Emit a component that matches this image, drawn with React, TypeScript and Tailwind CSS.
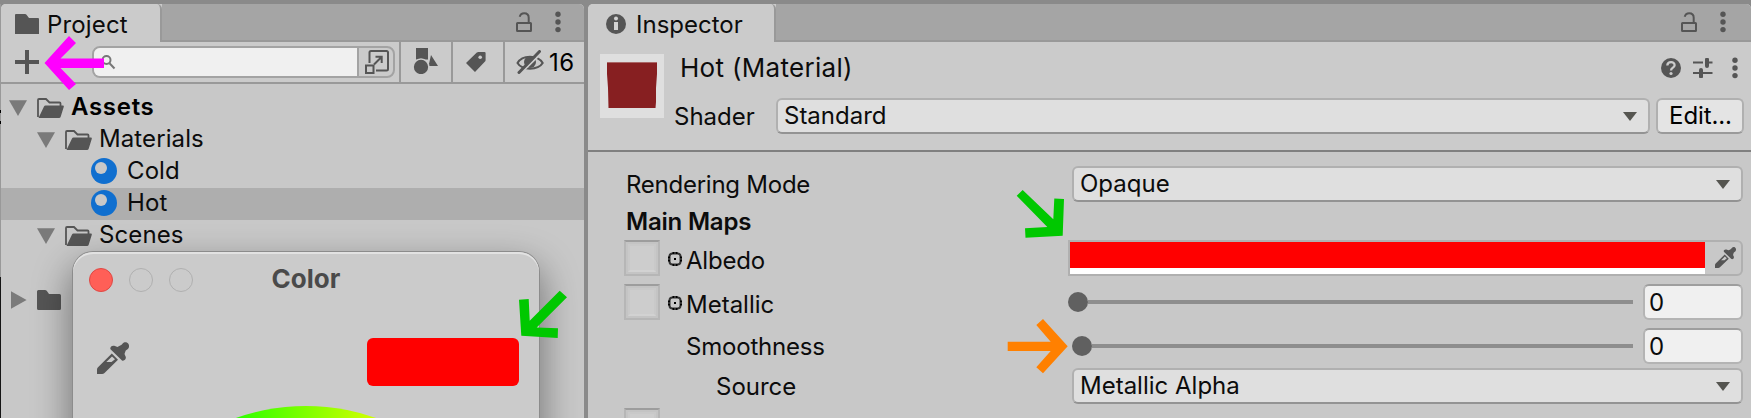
import React from "react";

type Box = { className?: string };

function Kebab({ className = "" }: Box) {
  return (
    <svg width="6" height="22" viewBox="0 0 6 22" className={`shrink-0 ${className}`} fill="#555">
      <circle cx="3" cy="3.2" r="2.7" />
      <circle cx="3" cy="11" r="2.7" />
      <circle cx="3" cy="18.6" r="2.7" />
    </svg>
  );
}

function Lock({ className = "" }: Box) {
  return (
    <svg width="16" height="20" viewBox="0 0 16 20" className={`shrink-0 ${className}`} fill="none" stroke="#555" strokeWidth="2">
      <rect x="1" y="11" width="14" height="8" rx="0.5" />
      <path d="M3.7 4.8C4.3 2.4 6 1.2 8.2 1.2c2.700 0 4.500 1.800 4.500 4.500V11" />
    </svg>
  );
}

function FolderOpen() {
  return (
    <svg width="28" height="20" viewBox="0 0 28 20" className="shrink-0">
      <path d="M1 19V2q0-1 1-1h7l3.500 3.500H22.500q1 0 1 1V8" fill="none" stroke="#555" strokeWidth="1.800" />
      <path d="M7 8.500Q7.500 7.600 8.500 7.600H25.800q1.400 0 1 1.200L23.700 18.700Q23.300 20 22 20H1.500z" fill="#555" />
    </svg>
  );
}

function Fold({ closed = false }: { closed?: boolean }) {
  return (
    <svg width="18" height="18" viewBox="0 0 18 18" className="shrink-0" fill="#7a7a7a">
      {closed ? <path d="M2 0.300L17.600 9 2 17.800z" /> : <path d="M0 1.300H18L9 17z" />}
    </svg>
  );
}

function MaterialBall() {
  return (
    <svg width="26" height="26" viewBox="0 0 26 26" className="shrink-0">
      <circle cx="13" cy="13" r="13" fill="#106fcf" />
      <circle cx="10" cy="10" r="6" fill="#c8c8c8" />
    </svg>
  );
}

function Dropper({ className = "" }: Box) {
  return (
    <svg viewBox="0 0 32 32" className={`shrink-0 ${className}`}>
      <path d="M13.500 7.200C12.600 5.200 14.800 3 17.300 3.800L20.500 5C22 4.200 24.500 3.300 25.700 1.500 27.200-.5 30.300-.2 31.500 2 32.700 4.300 31.800 6.700 29.800 7.800 28 8.800 28.300 10.500 27.500 12L28.800 15C29.200 17.400 27 19.300 25 18.400z" fill="#555" />
      <path fillRule="evenodd" d="M14.800 11.500L21 17.800 7.500 31Q6.500 32 5 32H0V27.500Q0 26.200 1 25.200zM15 14.500L9.300 20H14.500L18 17.200z" fill="#555" />
    </svg>
  );
}

function Caret() {
  return (
    <svg width="14" height="9" viewBox="0 0 14 9" className="shrink-0" fill="#555550">
      <path d="M0 0H14L7 9z" />
    </svg>
  );
}

function Dropdown({ label, className = "" }: { label: string; className?: string }) {
  return (
    <div className={`flex h-9 items-center justify-between rounded-[6px] border-2 border-[#b0b0b0] border-b-[#939393] bg-[#dfdfdf] pr-[11px] pl-[6px] ${className}`}>
      <span>{label}</span>
      <Caret />
    </div>
  );
}

function Slider({ value, className = "" }: { value: string; className?: string }) {
  return (
    <div className="flex h-9 items-center">
      <div className={`flex w-[565px] items-center ${className}`}>
        <div className="size-5 rounded-full bg-[#606060]" />
        <div className="h-1 flex-1 bg-[#8e8e8e]" />
      </div>
      <div className="ml-auto flex h-9 w-[100px] items-center rounded-[6px] border-2 border-[#b4b4b4] border-t-[#9e9e9e] bg-[#f0f0f0] pt-px pl-1">
        {value}
      </div>
    </div>
  );
}

function TextureSlot() {
  return (
    <div className="size-9 shrink-0 border-2 border-[#b6b6b6] border-t-[#9d9d9d] bg-[#c4c4c4] p-[2px]">
      <div className="size-full border-2 border-[#c9c9c9] border-b-[#d2d2d2] bg-[#cdcdcd]" />
    </div>
  );
}

function Target() {
  return (
    <svg width="14" height="14" viewBox="0 0 14 14" className="mt-0.5 mr-1 ml-2 shrink-0" fill="none">
      <rect x="1.500" y="1.500" width="11" height="11" rx="3" stroke="#333" strokeWidth="2" />
      <path d="M4.500 1H9.500M4.500 13H9.500M1 4.500V9.500M13 4.500V9.500" stroke="#000" strokeWidth="2" />
      <path d="M7 0V2M7 12V14M0 7H2M12 7H14" stroke="#666" strokeWidth="1" />
      <rect x="6" y="6" width="2" height="2" fill="#000" />
    </svg>
  );
}

function TreeRow({ label, indent, ball = false, selected = false, bold = false }: { label: string; indent: string; ball?: boolean; selected?: boolean; bold?: boolean }) {
  return (
    <div className={`flex h-8 items-center ${indent} ${selected ? "bg-[#aeaeae]" : ""}`}>
      {ball ? (
        <div className="mr-[10px] -mt-0.5"><MaterialBall /></div>
      ) : (
        <div className="mr-1.5 flex items-center gap-[10px]">
          <Fold />
          <FolderOpen />
        </div>
      )}
      <span className={`-mt-[3px] ${bold ? "font-semibold tracking-[0.7px] text-black" : "tracking-[0.1px]"}`}>{label}</span>
    </div>
  );
}

function ProjectPanel() {
  return (
    <section className="flex w-[583px] shrink-0 flex-col overflow-hidden rounded-t-[5px] bg-[#c8c8c8]">
      <div className="flex h-[38px] shrink-0 bg-[#cbcbcb]">
        <div className="flex w-[161px] items-center rounded-tr-[5px] border-r-2 border-[#999] bg-[#cbcbcb] pl-[14px]">
          <svg width="24" height="20" viewBox="0 0 24 20" fill="#555" className="mt-0.5">
            <path d="M0 1q0-1 1-1H10q1 0 1.500.7L14 4H23q1 0 1 1V20H0z" />
          </svg>
          <span className="mt-[3px] ml-2 tracking-[0.15px]">Project</span>
        </div>
        <div className="flex flex-1 items-center justify-end border-b-2 border-[#999] bg-[#a5a5a5] pr-[23px]">
          <Lock className="mr-[23px]" />
          <Kebab />
        </div>
      </div>
      <div className="flex h-[42px] shrink-0 border-b-2 border-[#999] bg-[#cbcbcb]">
        <svg width="24" height="24" viewBox="0 0 24 24" className="mt-2 ml-[14px]" fill="#555">
          <path d="M10 0H14V10H24V14H14V24H10V14H0V10H10z" />
        </svg>
        <div className="mt-1 ml-[53px] flex h-8 w-[303px] rounded-[8px] border-2 border-[#a3a3a3]">
          <div className="flex w-[265px] items-center rounded-l-[6px] border-r-2 border-[#a3a3a3] bg-[#f0f0f0] pl-2">
            <svg width="14" height="15" viewBox="0 0 14 15" fill="none" stroke="#777" strokeWidth="2">
              <circle cx="4.500" cy="5" r="4" />
              <path d="M7.500 8.200L12.500 13.500" />
            </svg>
          </div>
          <svg width="26" height="26" viewBox="0 0 26 26" className="mt-px ml-[5px]" fill="none" stroke="#555" strokeWidth="2">
            <path d="M5.500 14V3.500Q5.500 2 7 2H22.500Q24 2 24 3.500V20Q24 21.500 22.500 21.500H12" />
            <rect x="2" y="16.500" width="7.500" height="7.500" />
            <path d="M10 15.500L17.500 8M11.500 7.800H17.700V14" />
          </svg>
        </div>
        <div className="ml-1 flex w-[54px] border-x-2 border-[#999] pt-[6px] pl-3">
          <svg width="26" height="26" viewBox="0 0 26 26" fill="#555">
            <path d="M3 0H15V11.500H3zM18 7L25 18H15.500z" />
            <circle cx="8" cy="19" r="7.900" fill="#555" stroke="#cbcbcb" strokeWidth="1.500" />
          </svg>
        </div>
        <div className="flex w-[52px] border-r-2 border-[#999] pt-[10px] pl-[13px]">
          <svg width="20" height="20" viewBox="0 0 20 20">
            <path d="M0 11L10.800.6Q11.500 0 12.500 0H18.500Q19.600 0 19.600 1V8Q19.600 9 19 9.600L9 20z" fill="#555" />
            <circle cx="14.200" cy="5.200" r="1.800" fill="#cbcbcb" />
          </svg>
        </div>
        <div className="flex flex-1 items-center pl-[11px]">
          <svg width="28" height="24" viewBox="0 0 28 24" className="-mt-px">
            <path d="M1.500 13C6 4.500 22 4.500 26.700 13 22 20.500 6 20.500 1.500 13z" fill="none" stroke="#555" strokeWidth="2" />
            <circle cx="14" cy="12" r="6" fill="#555" />
            <path d="M5 23L26 2.500" stroke="#cbcbcb" strokeWidth="2" />
            <path d="M3 22.500L23.500 1.500" stroke="#555" strokeWidth="3" strokeLinecap="round" />
          </svg>
          <span className="mt-[2px] ml-[5px] tracking-[0.6px] text-black">16</span>
        </div>
      </div>
      <div className="flex flex-1 flex-col pt-2">
        <TreeRow label="Assets" indent="pl-2" bold />
        <TreeRow label="Materials" indent="pl-9" />
        <TreeRow label="Cold" indent="pl-[90px]" ball />
        <TreeRow label="Hot" indent="pl-[90px]" ball selected />
        <TreeRow label="Scenes" indent="pl-9" />
        <div className="mt-8 flex h-8 items-center gap-[10px] pl-2">
          <Fold closed />
          <svg width="24" height="20" viewBox="0 0 24 20" fill="#555">
            <path d="M0 1.500Q0 0 1.500 0H8Q9 0 9.700.8L12 4H22.500Q24 4 24 5.500V18.500Q24 20 22.500 20H1.500Q0 20 0 18.500z" />
          </svg>
          <div className="mb-1 ml-px h-4 w-px bg-[#555]" />
        </div>
      </div>
    </section>
  );
}

function ColorWindow() {
  return (
    <div className="absolute top-[252px] left-[73px] h-[240px] w-[466px] rounded-[20px] bg-[#cbcbcb] shadow-[0_0_0_1px_#8c8c8c,0_16px_36px_4px_rgba(0,0,0,0.4),inset_0_2px_0_#e2e2e2]">
      <div className="relative flex h-14 items-center gap-4 pl-4">
        <div className="size-6 rounded-full border border-[#df4844] bg-[#ff5f57]" />
        <div className="size-6 rounded-full border border-[#b0b0b0]" />
        <div className="size-6 rounded-full border border-[#b0b0b0]" />
        <div className="absolute inset-x-0 top-[7px] text-center text-[26px] leading-10 font-bold text-[#4a4a4a]">Color</div>
      </div>
      <div className="mt-[30px] flex justify-between pr-5 pl-6">
        <Dropper className="mt-1 size-8" />
        <div className="h-12 w-[152px] rounded-[6px] bg-[#ff0000]" />
      </div>
      <div className="absolute top-[154px] left-[22px] size-[422px] rounded-full bg-[conic-gradient(from_-90deg,#00ffff,#00ff00_60deg,#ffff00_120deg,#ff0000_180deg,#ff00ff_240deg,#0000ff_300deg,#00ffff)]" />
    </div>
  );
}

function InspectorPanel() {
  return (
    <section className="flex min-w-0 flex-1 flex-col overflow-hidden rounded-t-[5px] bg-[#c8c8c8]">
      <div className="flex h-[38px] shrink-0 bg-[#cbcbcb]">
        <div className="flex w-[188px] items-center rounded-tr-[5px] border-r-2 border-[#999] pl-[18px]">
          <svg width="20" height="20" viewBox="0 0 20 20" className="mt-0.5">
            <circle cx="10" cy="10" r="10" fill="#555" />
            <circle cx="10" cy="4.500" r="2" fill="#d2d2d2" />
            <path d="M8 8H12V16H8z" fill="#d2d2d2" />
          </svg>
          <span className="mt-[3px] ml-[10px]">Inspector</span>
        </div>
        <div className="flex flex-1 items-center justify-end border-b-2 border-[#999] bg-[#a5a5a5] pr-[25px]">
          <Lock className="mr-[23px]" />
          <Kebab />
        </div>
      </div>
      <header className="flex h-[110px] shrink-0 border-b-2 border-[#808080] bg-[#cbcbcb] pt-3 pl-3">
        <div className="size-16 shrink-0 bg-[#dfdfdf] pt-2 pl-[7px]">
          <svg width="50" height="46" viewBox="0 0 50 46">
            <path d="M0 0H50V12L49 26V40L48.500 46H1.500L1 26 0 12z" fill="#871f21" />
            <path d="M0 .5H50" stroke="#a66" />
          </svg>
        </div>
        <div className="flex flex-1 flex-col pr-[7px] pl-[10px]">
          <div className="-mt-px flex h-[30px] items-center">
            <span className="ml-[6px] text-[26px] tracking-[0.3px]">Hot (Material)</span>
            <svg width="20" height="20" viewBox="0 0 20 20" className="ml-auto">
              <circle cx="10" cy="10" r="10" fill="#555" />
              <path d="M6.300 7.500C6.500 3 13.700 3 13.600 7.200 13.500 9.700 10 9.500 10 12.500" fill="none" stroke="#cbcbcb" strokeWidth="2.300" />
              <circle cx="10" cy="15.500" r="1.600" fill="#cbcbcb" />
            </svg>
            <svg width="20" height="20" viewBox="0 0 20 20" className="mr-[19px] ml-3" stroke="#555">
              <path d="M0 4.500H10M14 4.500H19.500M0 15H6M10 15H19.500" strokeWidth="2" />
              <path d="M14 1.500V8M8 12V18.500" strokeWidth="4" strokeLinecap="round" />
            </svg>
            <Kebab className="mr-[6px]" />
          </div>
          <div className="mt-[15px] flex h-9 items-center">
            <span className="w-[102px] pt-[2px]">Shader</span>
            <Dropdown label="Standard" className="flex-1" />
            <div className="ml-[6px] flex h-9 w-[88px] items-center justify-center rounded-[6px] border-2 border-[#b0b0b0] border-b-[#9a9a9a] bg-[#e4e4e4] pl-px tracking-[-0.1px] text-black">Edit...</div>
          </div>
        </div>
      </header>
      <div className="flex flex-col gap-2 pt-[14px] pr-2 pl-9">
        <div className="flex h-9 items-center">
          <span className="w-[448px] pt-0.5 pl-[2px] tracking-[-0.25px]">Rendering Mode</span>
          <Dropdown label="Opaque" className="flex-1" />
        </div>
        <div className="-mt-[2px] flex h-[24px] items-center pt-1 pl-[2px] font-semibold tracking-[-0.2px]">Main Maps</div>
        <div className="flex h-9 items-center">
          <TextureSlot />
          <Target />
          <span className="w-[382px] pt-1.5 tracking-[-0.2px]">Albedo</span>
          <div className="flex h-9 flex-1 rounded-r-[6px] border-2 border-[#b0b0b0]">
            <div className="w-[635px] border-b-[6px] border-white bg-[#ff0000]" />
            <Dropper className="mt-[5px] ml-[10px] size-[21px]" />
          </div>
        </div>
        <div className="flex h-9 items-center">
          <TextureSlot />
          <Target />
          <span className="w-[382px] pt-1.5">Metallic</span>
          <div className="flex-1"><Slider value="0" /></div>
        </div>
        <div className="flex h-9 items-center">
          <span className="w-[444px] pt-0.5 pl-[62px] tracking-[-0.2px]">Smoothness</span>
          <div className="flex-1"><Slider value="0" className="pl-1" /></div>
        </div>
        <div className="-mt-1 flex h-9 items-center">
          <span className="w-[448px] pt-0.5 pl-[92px]">Source</span>
          <Dropdown label="Metallic Alpha" className="flex-1" />
        </div>
        <div className="-mt-1"><TextureSlot /></div>
      </div>
    </section>
  );
}

function Pointers() {
  return (
    <svg width="1751" height="418" viewBox="0 0 1751 418" className="pointer-events-none absolute inset-0">
      <path fill="#ff00ff" d="M44.500 63L69 36 76 43 60.500 58.500H104V68H60.500L76 84 69 90z" />
      <path fill="#00c800" d="M1016.700 195.700L1022.700 190 1053.300 219.300 1054.300 198.600 1064 199 1062.700 235.700 1025.500 237.700 1025 228.300 1047.300 227z" />
      <path fill="#00c800" d="M559.700 290.700L567 297.300 536.700 327.500 558 328.300 557.700 338 521.300 335.700 519 299.700 528.700 299 529.700 320.700z" />
      <path fill="#ff8000" d="M1007.700 341.700H1050.700L1036.300 325 1043 319 1067.700 346.300 1043 373.300 1036.300 367.300 1050.700 351H1007.700z" />
    </svg>
  );
}

export default function App() {
  return (
    <main className="relative flex h-[418px] w-[1751px] overflow-hidden bg-[#8a8a8a] pt-1 font-['Inter','Liberation_Sans',sans-serif] text-[24px] leading-8 whitespace-nowrap text-[#0c0c0c]">
      <div className="flex w-px flex-col bg-[#999]">
        <div className="mt-[106px] h-[3px] bg-black" />
        <div className="mt-[8px] h-[3px] bg-black" />
        <div className="mt-[153px] flex-1 bg-[#151515]" />
      </div>
      <div className="relative flex w-[583px] shrink-0">
        <ProjectPanel />
      </div>
      <div className="absolute inset-y-0 left-px w-[583px] overflow-hidden">
        <div className="absolute inset-y-0 -left-px w-[584px]">
          <ColorWindow />
        </div>
      </div>
      <div className="w-1 shrink-0" />
      <InspectorPanel />
      <Pointers />
    </main>
  );
}
